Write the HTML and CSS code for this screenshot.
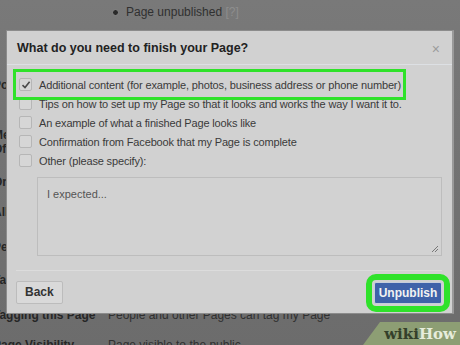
FILE: index.html
```html
<!DOCTYPE html>
<html lang="en">
<head>
    <meta charset="UTF-8">
    <meta name="viewport" content="width=device-width, initial-scale=1.0">
    <title>Unpublish Page</title>
    <link rel="stylesheet" href="styles.css">
</head>
<body>

    <div id="pagina">
        <div class="label"></div>
        <div class="value"><span class="radio"></span>Page unpublished <span class="hint">[?]</span></div>
        <div class="label">Po</div>
        <div class="value"></div>
        <div class="label">Me<br>Of</div>
        <div class="value"></div>
        <div class="label">One</div>
        <div class="value"></div>
        <div class="label">All</div>
        <div class="value"></div>
        <div class="label">Pes</div>
        <div class="value"></div>
        <div class="label">Ta</div>
        <div class="value"></div>
        <div class="label">Tagging this Page</div>
        <div class="value">People and other Pages can tag my Page</div>
        <div class="label">Page Visibility</div>
        <div class="value">Page visible to the public</div>
    </div>

    <div id="dialogo">
        <div class="cabecera">
            <h1>What do you need to finish your Page?</h1>
            <span class="cerrar">&#215;</span>
        </div>

        <div class="cuerpo">
            <label class="opcion marcada"><span class="caja"><svg width="10" height="10" viewBox="0 0 10 10"><path d="M1.5 5.2 L4 7.6 L8.6 1.8" fill="none" stroke="#4a4a4a" stroke-width="1.6"/></svg></span>Additional content (for example, photos, business address or phone number)</label>
            <label class="opcion"><span class="caja"></span>Tips on how to set up my Page so that it looks and works the way I want it to.</label>
            <label class="opcion"><span class="caja"></span>An example of what a finished Page looks like</label>
            <label class="opcion"><span class="caja"></span>Confirmation from Facebook that my Page is complete</label>
            <label class="opcion"><span class="caja"></span>Other (please specify):</label>
            <div class="texto">
                <span class="placeholder">I expected...</span>
                <svg class="agarre" width="8" height="8" viewBox="0 0 8 8"><path d="M1 7 L7 1 M4 7 L7 4" stroke="#777" stroke-width="1"/></svg>
            </div>
        </div>

        <div class="pie">
            <button class="volver">Back</button>
            <button class="despublicar">Unpublish</button>
        </div>
    </div>

    <div id="marca"><span class="wiki">wiki</span><span class="how">How</span></div>

</body>
</html>
```

FILE: styles.css
```css
body {
    margin: 0;
    width: 460px;
    height: 345px;
    overflow: hidden;
    position: relative;
    font-family: "Liberation Sans", Arial, sans-serif;
    background: linear-gradient(#797979, #6c6c6c);
    color: #262626;
}

#pagina {
    display: grid;
    grid-template-columns: 115px 1fr;
    grid-template-rows: 73px 50px 47px 30px 35px 33px 35px 30px auto;
    margin-left: -7px;
    padding-top: 5px;
    font-size: 12px;
    line-height: 14px;
}

#pagina .label {
    font-weight: bold;
    white-space: nowrap;
    overflow: hidden;
}

#pagina .value {
    white-space: nowrap;
    color: #303030;
}

.radio {
    display: inline-block;
    width: 5px;
    height: 5px;
    border-radius: 50%;
    background: #2a2a2a;
    border: 1px solid #8a8a8a;
    margin: 0 7px 1px 4px;
    vertical-align: middle;
}

.hint {
    color: #8e8e8e;
}

#dialogo {
    position: absolute;
    left: 6px;
    top: 30px;
    width: 445px;
    height: 282px;
    background: #d1d1d1;
    border: 1px solid #8c8c8c;
    border-right: 2px solid #9a9a9a;
    color: #3a3a3a;
}

.cabecera {
    display: flex;
    justify-content: space-between;
    align-items: center;
    height: 33px;
    padding: 0 12px 0 10px;
    border-bottom: 1px solid #dde0e4;
}

.cabecera h1 {
    margin: 0;
    font-size: 12.5px;
    font-weight: bold;
    color: #222;
}

.cerrar {
    font-size: 14px;
    color: #9c9c9c;
    margin-top: 2px;
}

.cuerpo {
    padding: 10px 10px 0 12px;
}

.opcion {
    display: flex;
    align-items: center;
    height: 19px;
    font-size: 11px;
    letter-spacing: -0.15px;
    white-space: nowrap;
}

.marcada {
    outline: 3px solid #2fe22a;
    outline-offset: 3px;
    margin-right: 42px;
}

.caja {
    display: inline-flex;
    align-items: center;
    justify-content: center;
    width: 11px;
    height: 11px;
    border: 1px solid #b6b6b6;
    border-radius: 2px;
    background: #d6d6d6;
    margin-right: 7px;
    flex: none;
}

.texto {
    position: relative;
    margin: 7px 0 0 18px;
    height: 77px;
    border: 1px solid #bdbdbd;
    background: #d2d2d2;
    font-size: 11px;
}

.placeholder {
    display: block;
    padding: 10px 9px;
    color: #555;
}

.agarre {
    position: absolute;
    right: 2px;
    bottom: 2px;
}

.pie {
    display: flex;
    justify-content: space-between;
    align-items: center;
    margin: 14px 10px 0 9px;
    padding-top: 9px;
    border-top: 1px solid #dcdcdc;
}

button {
    font-family: "Liberation Sans", Arial, sans-serif;
    font-weight: bold;
    font-size: 12px;
    cursor: pointer;
    border-radius: 2px;
}

.volver {
    height: 23px;
    padding: 0 8px;
    background: #d9d9d9;
    border: 1px solid #bcbcbc;
    color: #333;
}

.despublicar {
    height: 22px;
    width: 68px;
    padding: 0;
    margin-top: 2px;
    background: #3f62a9;
    border: 1px solid #c6cedc;
    color: #f2f2f2;
    outline: 6px solid #2fe22a;
    outline-offset: 2px;
}

#marca {
    position: absolute;
    right: 0;
    bottom: 0;
    width: 97px;
    height: 23px;
    background: #8d9e74;
    clip-path: polygon(17px 0, 100% 0, 100% 100%, 0 100%);
    font-family: "DejaVu Serif", "Liberation Serif", serif;
    font-weight: bold;
    font-size: 15px;
    line-height: 24px;
    text-align: right;
    padding-right: 4px;
    box-sizing: border-box;
}

.wiki {
    color: #34402a;
}

.how {
    color: #e6ecdc;
}
```
